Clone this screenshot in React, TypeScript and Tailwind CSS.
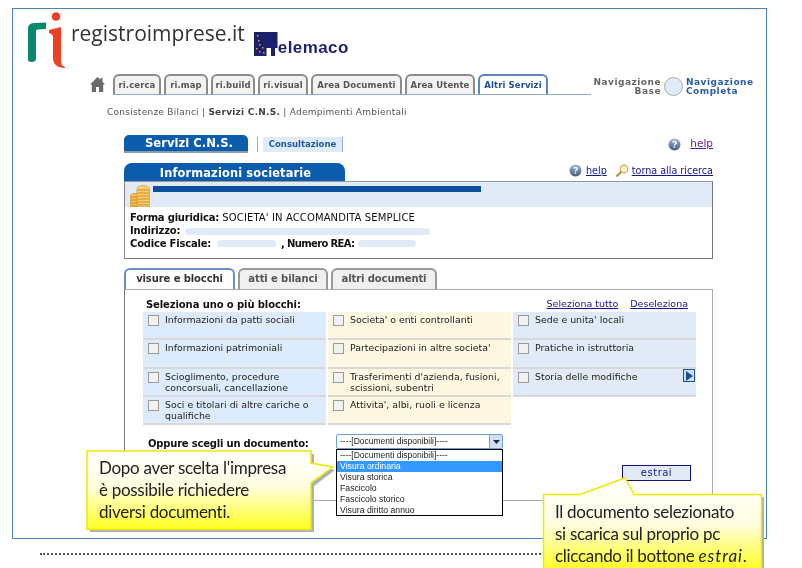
import React from "react";

const V = "font-['DejaVu_Sans',sans-serif]";

function Logo() {
  return (
    <svg width="40" height="58" viewBox="0 0 40 58" className="shrink-0">
      <path d="M0 48V17C0 12 3 11 8 11L18 10.500V17L10 17.500C8.500 17.500 8 18 8 20V46C8 49 6 50 4 50C1 50 0 49 0 48Z" fill="#0a8a6a" />
      <circle cx="28" cy="4.500" r="4.300" fill="#e8402a" />
      <path d="M21 18L33 15V48C33 52 34 54 37 55V56C29 56 25 52 25 46V24C24 22 22 21 21 21Z" fill="#ee4023" />
    </svg>
  );
}

function Telemaco() {
  return (
    <svg width="24" height="24" viewBox="0 0 24 24" className="shrink-0">
      <rect width="23.500" height="24" fill="#1c1f6b" />
      <rect x="12.500" y="16" width="4.500" height="8" fill="#fff" />
      <rect x="21" y="16" width="3" height="8" fill="#fff" />
      <g fill="#e0a92a">
        <rect x="3" y="3" width="1.500" height="1.500" />
        <rect x="4" y="8" width="1.500" height="1.500" />
        <rect x="5" y="12" width="1.500" height="1.500" />
        <rect x="8" y="15" width="1.500" height="1.500" />
        <rect x="5" y="19" width="1.500" height="1.500" />
        <rect x="9" y="20" width="1.500" height="1.500" />
        <rect x="2" y="16" width="1.500" height="1.500" />
      </g>
    </svg>
  );
}

function HelpIcon() {
  return (
    <svg width="13" height="13" viewBox="0 0 13 13" className="shrink-0">
      <defs>
        <linearGradient id="hg" x1="0" y1="0" x2="0" y2="1">
          <stop offset="0" stopColor="#a8bcd4" />
          <stop offset="1" stopColor="#40587a" />
        </linearGradient>
      </defs>
      <circle cx="6.500" cy="6.500" r="6" fill="url(#hg)" />
      <path d="M4.800 4.500C5.500 3 8.500 3.300 8.200 5C8 6 6.500 6.200 6.300 7.500" fill="none" stroke="#fff" strokeWidth="1.300" />
      <rect x="5.700" y="8.400" width="1.500" height="1.400" fill="#fff" />
    </svg>
  );
}

function KeyIcon() {
  return (
    <svg width="14" height="14" viewBox="0 0 14 14" className="shrink-0 block">
      <circle cx="9" cy="5" r="3.800" fill="#fdf6d0" stroke="#c9a850" strokeWidth="1.200" />
      <path d="M6.500 7.500L1.500 12.500" stroke="#b08c38" strokeWidth="2" />
    </svg>
  );
}

function Coins() {
  return (
    <svg width="21" height="22" viewBox="0 0 21 22" className="shrink-0">
      <path d="M0.500 22V11C0.500 9 2 8.500 4 8.500H8V22Z" fill="#f8c050" stroke="#b8801c" strokeWidth="0.500" />
      <path d="M7 22V4C7 2 9 0.500 13 0.500C17 0.500 19.500 2 19.500 4V22Z" fill="#fbd070" stroke="#b8801c" strokeWidth="0.500" />
      <path d="M1 12H7.500M1 15H7.500M1 18H7.500M1 21H7.500M7.500 5H19M7.500 8H19M7.500 11H19M7.500 14H19M7.500 17H19M7.500 20H19" stroke="#d08c20" strokeWidth="1" />
    </svg>
  );
}

function Tab({ label, w, active }: { label: string; w: string; active?: boolean }) {
  return (
    <div
      className={`h-[20px] ${w} rounded-t-[6px] border-2 border-b-0 flex items-center justify-center text-[8.500px] font-bold tracking-[0.1px] ${
        active ? "border-[#5b86bd] bg-white text-[#1f4f96]" : "border-[#8c8c8c] bg-[#f2f2f2] text-[#555]"
      }`}
    >
      {label}
    </div>
  );
}

function Block({ text, bg, arrow }: { text: React.ReactNode; bg: string; arrow?: boolean }) {
  return (
    <div className={`relative flex gap-[6px] pl-[5px] pt-[3px] border-b-2 border-[#d8d8d8] ${bg}`}>
      <span className="w-[11px] h-[11px] shrink-0 border border-[#9a9a9a] bg-[#f1f1f1]" />
      <span className="-mt-[1.500px] text-[9.400px] leading-[11.500px] text-[#222]">{text}</span>
      {arrow && (
        <span className="absolute right-[1px] top-0 w-[12px] h-[13px] bg-[#cfe0f5] border border-[#1f4f96] flex items-center justify-center">
          <svg width="8" height="10" viewBox="0 0 8 10">
            <path d="M1 0L8 5L1 10Z" fill="#1f4f96" />
          </svg>
        </span>
      )}
    </div>
  );
}

function Callout1() {
  return (
    <div className="absolute left-[85px] top-[449px] w-[252px] h-[84px]">
      <svg width="252" height="84" viewBox="0 0 252 84" className="absolute inset-0">
        <defs>
          <linearGradient id="y1" x1="0" y1="0" x2="0" y2="1">
            <stop offset="0" stopColor="#ffffff" />
            <stop offset="0.450" stopColor="#fffde0" />
            <stop offset="1" stopColor="#ffff20" />
          </linearGradient>
        </defs>
        <path d="M5 5H229V17L250 21L229 37V83H5Z" fill="#a8b0bc" />
        <path d="M2 2H226V14L248 18L226 34V80.500H2Z" fill="url(#y1)" stroke="#f0e800" strokeWidth="1.500" />
      </svg>
      <p className="absolute left-[14px] top-[8px] text-[17px] leading-[22px] tracking-[-0.3px] text-[#222] font-['Lato',sans-serif] whitespace-nowrap">
        Dopo aver scelta l'impresa
        <br />è possibile richiedere
        <br />diversi documenti.
      </p>
    </div>
  );
}

function Callout2() {
  return (
    <div className="absolute left-[541px] top-[476px] w-[225px] h-[92px]">
      <svg width="225" height="92" viewBox="0 0 225 92" className="absolute inset-0">
        <defs>
          <linearGradient id="y2" x1="0" y1="0" x2="0" y2="1">
            <stop offset="0" stopColor="#ffffff" />
            <stop offset="0.500" stopColor="#fffde0" />
            <stop offset="1" stopColor="#ffff20" />
          </linearGradient>
        </defs>
        <path d="M5 21H223V92H5Z" fill="#a8b0bc" />
        <path d="M2.500 18.500H39L84 2L93 18.500H220.500V94H2.500Z" fill="url(#y2)" stroke="#f0e800" strokeWidth="1.500" />
      </svg>
      <p className="absolute left-[14px] top-[25px] text-[17px] leading-[22px] tracking-[-0.3px] text-[#222] font-['Lato',sans-serif] whitespace-nowrap">
        Il documento selezionato
        <br />si scarica sul proprio pc
        <br />cliccando il bottone <i className="tracking-[0.9px]">estrai</i>.
      </p>
    </div>
  );
}

export default function App() {
  return (
    <div className={`relative w-[802px] h-[568px] overflow-hidden bg-white ${V} blur-[0.35px]`}>
      <div className="ml-[12px] mt-[8px] w-[755px] h-[531px] border border-[#4a82bd] pt-[3px]">
        {/* Logos */}
        <div className="flex items-start pl-[15px] h-[62px]">
          <Logo />
          <span className="ml-[3px] mt-[6px] text-[21px] leading-[30px] font-['Open_Sans',sans-serif] font-normal text-[#333]">
            registroimprese.it
          </span>
          <div className="ml-[9px] mt-[20px] flex items-end">
            <Telemaco />
            <span className="text-[17px] leading-[17px] font-bold text-[#1c1f6b] font-['Liberation_Sans',sans-serif] tracking-[0.4px]">
              elemaco
            </span>
          </div>
        </div>
        {/* Main nav */}
        <div className="flex items-end pl-[77px] h-[21px]">
          <svg width="15" height="15" viewBox="0 0 15 15" className="mb-[3px] mr-[8px] shrink-0">
            <path d="M7.500 0L10.500 2.800V1H12.500V4.700L15 7.500H13.200V15H9V10H6V15H1.800V7.500H0Z" fill="#6a6a6a" />
          </svg>
          <div className="flex gap-[3px] border-b border-[#8fa8cc] w-[478px] h-[21px]">
            <Tab label="ri.cerca" w="w-[48px]" />
            <Tab label="ri.map" w="w-[44px]" />
            <Tab label="ri.build" w="w-[44px]" />
            <Tab label="ri.visual" w="w-[50px]" />
            <Tab label="Area Documenti" w="w-[91px]" />
            <Tab label="Area Utente" w="w-[70px]" />
            <Tab label="Altri Servizi" w="w-[70px]" active />
          </div>
          <div className="ml-[2px] flex items-center self-start mt-[3px] text-[9px] leading-[8.500px] font-bold tracking-[0.5px]">
            <span className="w-[68px] text-right text-[#666]">
              Navigazione
              <br />
              Base
            </span>
            <span className="mx-[3px] w-[19px] h-[19px] rounded-full bg-[#e1ebf7] border border-[#aaa]" />
            <span className="text-[#2a5ea8]">
              Navigazione
              <br />
              Completa
            </span>
          </div>
        </div>
        {/* Sub nav */}
        <div className="pl-[94px] mt-[11px] h-[12px] text-[9px] leading-[12px] text-[#555] tracking-[0.25px]">
          Consistenze Bilanci | <b className="text-[#444]">Servizi C.N.S.</b> | Adempimenti Ambientali
        </div>
        {/* Content */}
        <div className="ml-[111px] w-[589px] mt-[17px]">
          <div className="flex items-center h-[18px]">
            <div className="w-[124px] h-[18px] pl-[6px] rounded-t-[5px] bg-[#0b5cad] border-b-2 border-[#8a9aaa] text-white text-[11.600px] leading-[17px] font-bold text-center">
              Servizi C.N.S.
            </div>
            <span className="ml-[9px] w-px h-[15px] bg-[#8fb0d8]" />
            <span className="ml-[5px] w-[80px] h-[15px] bg-[#e1ebf7] border-r border-[#8fb0d8] text-[8.500px] leading-[15px] font-bold text-[#1f5aa0] text-center">
              Consultazione
            </span>
            <span className="ml-auto flex items-center gap-[9px] text-[10.500px] underline text-[#5a1a90]">
              <HelpIcon />
              help
            </span>
          </div>
          <div className="mt-[10px] flex items-end h-[18px]">
            <div className="w-[221px] h-[18px] pl-[2px] rounded-t-[8px] bg-[#0b5cad] text-white text-[11.400px] leading-[20px] font-bold text-center tracking-[0.15px]">
              Informazioni societarie
            </div>
            <div className="ml-auto mb-[3px] flex items-center text-[9.600px] underline text-[#14148c]">
              <HelpIcon />
              <span className="ml-[4px]">help</span>
              <span className="ml-[8px]">
                <KeyIcon />
              </span>
              <span className="ml-[3px]">torna alla ricerca</span>
            </div>
          </div>
          {/* Company box */}
          <div className="h-[78px] w-[589px] border border-t-[#999] border-l-[#888] border-r-[#777] border-b-[#777]">
            <div className="h-[25px] bg-[#e1ebf7] flex items-end pl-[5px]">
              <Coins />
              <div className="self-start mt-[4px] ml-[2px] w-[328px] h-[6px] bg-[#0b4f9e]" />
            </div>
            <div className="pl-[5px] pt-[5px] text-[10px] leading-[12.800px] tracking-[0.12px] text-[#111]">
              <div>
                <b className="tracking-[-0.2px]">Forma giuridica:</b> SOCIETA' IN ACCOMANDITA SEMPLICE
              </div>
              <div className="flex items-center">
                <b className="tracking-[-0.2px]">Indirizzo:</b>
                <span className="ml-[5px] w-[245px] h-[7px] rounded-full bg-[#e1ebf7]" />
              </div>
              <div className="flex items-center">
                <b className="tracking-[-0.2px]">Codice Fiscale:</b>
                <span className="ml-[6px] w-[59px] h-[7px] rounded-full bg-[#e1ebf7]" />
                <b className="ml-[5px] tracking-[-0.65px]">, Numero REA:</b>
                <span className="ml-[4px] w-[58px] h-[7px] rounded-full bg-[#e1ebf7]" />
              </div>
            </div>
          </div>
          {/* Doc tabs */}
          <div className="mt-[9px] flex gap-[3px] h-[21px] text-[10px] tracking-[-0.1px]">
            <div className="w-[111px] rounded-t-[6px] border-2 border-b-0 border-[#6a90c4] bg-white font-bold text-[#333] text-center leading-[18px]">
              visure e blocchi
            </div>
            <div className="w-[90px] rounded-t-[6px] border-2 border-b-0 border-[#999] bg-[#f0f0f0] font-bold text-[#555] text-center leading-[18px]">
              atti e bilanci
            </div>
            <div className="w-[106px] rounded-t-[6px] border-2 border-b-0 border-[#999] bg-[#f0f0f0] font-bold text-[#555] text-center leading-[18px]">
              altri documenti
            </div>
          </div>
          {/* Panel */}
          <div className="h-[212px] w-[589px] border border-[#aaa] border-l-[#777] pl-[18px] pr-[17px] pt-[7px]">
            <div className="flex items-center h-[15px]">
              <b className="ml-[3px] text-[10px] tracking-[-0.1px] text-[#111]">Seleziona uno o più blocchi:</b>
              <span className="ml-auto mr-[7px] flex gap-[12px] text-[9.500px] underline text-[#14148c]">
                <span>Seleziona tutto</span>
                <span>Deseleziona</span>
              </span>
            </div>
            <div className="grid grid-cols-[183px_183px_183px] grid-rows-[28px_29px_28px_28px] gap-x-[2px]">
              <Block bg="bg-[#dcecfc]" text="Informazioni da patti sociali" />
              <Block bg="bg-[#fdf7e1]" text="Societa' o enti controllanti" />
              <Block bg="bg-[#e1ebf7]" text="Sede e unita' locali" />
              <Block bg="bg-[#dcecfc]" text="Informazioni patrimoniali" />
              <Block bg="bg-[#fdf7e1]" text="Partecipazioni in altre societa'" />
              <Block bg="bg-[#e1ebf7]" text="Pratiche in istruttoria" />
              <Block bg="bg-[#dcecfc]" text={<>Scioglimento, procedure<br />concorsuali, cancellazione</>} />
              <Block bg="bg-[#fdf7e1]" text={<>Trasferimenti d'azienda, fusioni,<br />scissioni, subentri</>} />
              <Block bg="bg-[#e1ebf7]" text="Storia delle modifiche" arrow />
              <Block bg="bg-[#dcecfc]" text={<>Soci e titolari di altre cariche o<br />qualifiche</>} />
              <Block bg="bg-[#fdf7e1]" text="Attivita', albi, ruoli e licenza" />
            </div>
            <div className="mt-[9px] flex items-start pl-[5px]">
              <b className="w-[188px] pt-[4px] text-[10px] leading-[12px] tracking-[-0.2px] text-[#111]">Oppure scegli un documento:</b>
              <div className="relative w-[167px] h-[15px] border border-[#6f9fd0] rounded-[2px] pl-[3px] text-[8.500px] leading-[13px] font-['Liberation_Sans',sans-serif] text-[#222] bg-white">
                ----[Documenti disponibili]----
                <span className="absolute right-0 top-0 w-[13px] h-[13px] bg-[#cfe0f5] border-l border-[#6f9fd0] flex items-center justify-center">
                  <svg width="7" height="4" viewBox="0 0 7 4">
                    <path d="M0 0H7L3.500 4Z" fill="#1a2a44" />
                  </svg>
                </span>
                <div className="absolute -left-px top-[14px] w-[167px] h-[67px] border border-black bg-white text-[8.700px] leading-[11px]">
                  <div className="pl-[3px] text-[8.500px]">----[Documenti disponibili]----</div>
                  <div className="pl-[3px] bg-[#3399ff] text-white">Visura ordinaria</div>
                  <div className="pl-[3px]">Visura storica</div>
                  <div className="pl-[3px]">Fascicolo</div>
                  <div className="pl-[3px]">Fascicolo storico</div>
                  <div className="pl-[3px]">Visura diritto annuo</div>
                </div>
              </div>
            </div>
            <div className="mt-[15px] flex justify-end pr-[4px]">
              <span className="w-[69px] h-[16px] bg-[#e1ebf7] border border-[#141470] text-[10px] leading-[14px] tracking-[0.5px] text-[#14148c] text-center">
                estrai
              </span>
            </div>
          </div>
        </div>
      </div>
      {/* Dotted rule */}
      <div className="ml-[40px] mt-[14px] w-[505px] border-t-2 border-dotted border-[#555]" />
      <Callout1 />
      <Callout2 />
    </div>
  );
}
